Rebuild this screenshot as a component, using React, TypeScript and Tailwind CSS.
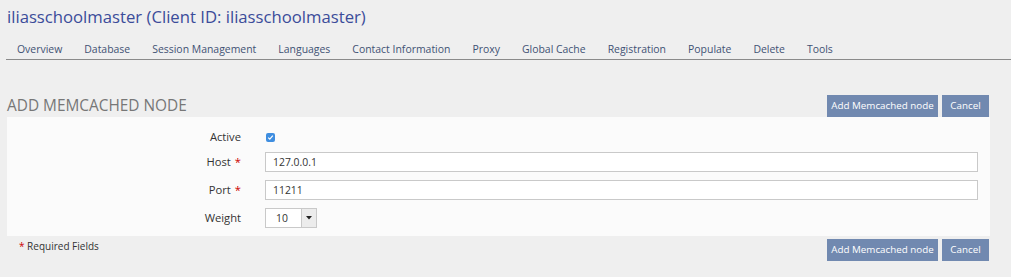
const tabs = [
  'Overview',
  'Database',
  'Session Management',
  'Languages',
  'Contact Information',
  'Proxy',
  'Global Cache',
  'Registration',
  'Populate',
  'Delete',
  'Tools',
]

const Buttons = () => (
  <div className="flex gap-[4px]">
    <button className="w-[111px] h-[22px] bg-[#7189b0] text-white text-[9.8px] leading-[22px] text-center">
      Add Memcached node
    </button>
    <button className="w-[47px] h-[22px] bg-[#7189b0] text-white text-[9.8px] leading-[22px] text-center">
      Cancel
    </button>
  </div>
)

const Label = ({ text, required }: { text: string; required?: boolean }) => (
  <div className="w-[234px] shrink-0 text-right text-[11.2px] text-[#333] leading-[20px]">
    {text}
    {required && <span className="text-[#cc0000] ml-[4px]">*</span>}
  </div>
)

export default function App() {
  return (
    <div
      className="w-full h-[277px] bg-[#efefef] overflow-hidden"
      style={{ fontFamily: '"Open Sans", "Liberation Sans", sans-serif' }}
    >
      <h1 className="pt-[6px] pl-[7px] text-[16.7px] leading-[22px] text-[#3b4c9a]">
        iliasschoolmaster (Client ID: iliasschoolmaster)
      </h1>

      <div className="mt-[11px] ml-[6px] flex border-b border-[#8a8a8a]">
        {tabs.map((t) => (
          <div key={t} className="px-[11px] h-[20px] leading-[20px] text-[10.45px] text-[#3f5274]">
            {t}
          </div>
        ))}
      </div>

      <div className="mt-[35px] flex items-center justify-between pl-[7px] pr-[22px] h-[22px]">
        <h2 className="text-[15.4px] text-[#777] uppercase leading-[22px]">Add Memcached node</h2>
        <Buttons />
      </div>

      <div className="ml-[7px] mr-[21px] bg-[#fbfbfb] pt-[10px] pb-[8px] pr-[12px]">
        <div className="flex items-center h-[20px] gap-[24px]">
          <Label text="Active" />
          <div className="w-[9px] h-[9px] ml-[1px] rounded-[2px] bg-[#3f8ee0] flex items-center justify-center">
            <svg width="7" height="7" viewBox="0 0 7 7">
              <path d="M1.2 3.6 L2.8 5.1 L5.8 1.6" stroke="white" strokeWidth="1.2" fill="none" />
            </svg>
          </div>
        </div>
        <div className="flex items-center h-[20px] gap-[24px] mt-[5px]">
          <Label text="Host" required />
          <input
            readOnly
            value="127.0.0.1"
            className="flex-1 h-[20px] border border-[#c9c9c9] bg-white px-[7px] text-[10.4px] text-[#333] outline-none"
          />
        </div>
        <div className="flex items-center h-[20px] gap-[24px] mt-[8px]">
          <Label text="Port" required />
          <input
            readOnly
            value="11211"
            className="flex-1 h-[20px] border border-[#c9c9c9] bg-white px-[7px] text-[10.4px] text-[#333] outline-none"
          />
        </div>
        <div className="flex items-center h-[20px] gap-[24px] mt-[8px]">
          <Label text="Weight" />
          <div className="w-[52px] h-[20px] border border-[#c9c9c9] bg-white flex">
            <div className="flex-1 pl-[10px] text-[10.4px] leading-[18px] text-[#333]">10</div>
            <div className="w-[15px] h-full bg-[#ececec] border-l border-[#c9c9c9] flex items-center justify-center">
              <svg width="6" height="4" viewBox="0 0 6 4">
                <path d="M0 0 L6 0 L3 3.5 Z" fill="#222" />
              </svg>
            </div>
          </div>
        </div>
      </div>

      <div className="mt-[3px] flex items-center justify-between pl-[19px] pr-[22px] h-[22px]">
        <div className="text-[10px] text-[#333] leading-[22px] -mt-[8px]">
          <span className="text-[#cc0000]">*</span> Required Fields
        </div>
        <Buttons />
      </div>
    </div>
  )
}
